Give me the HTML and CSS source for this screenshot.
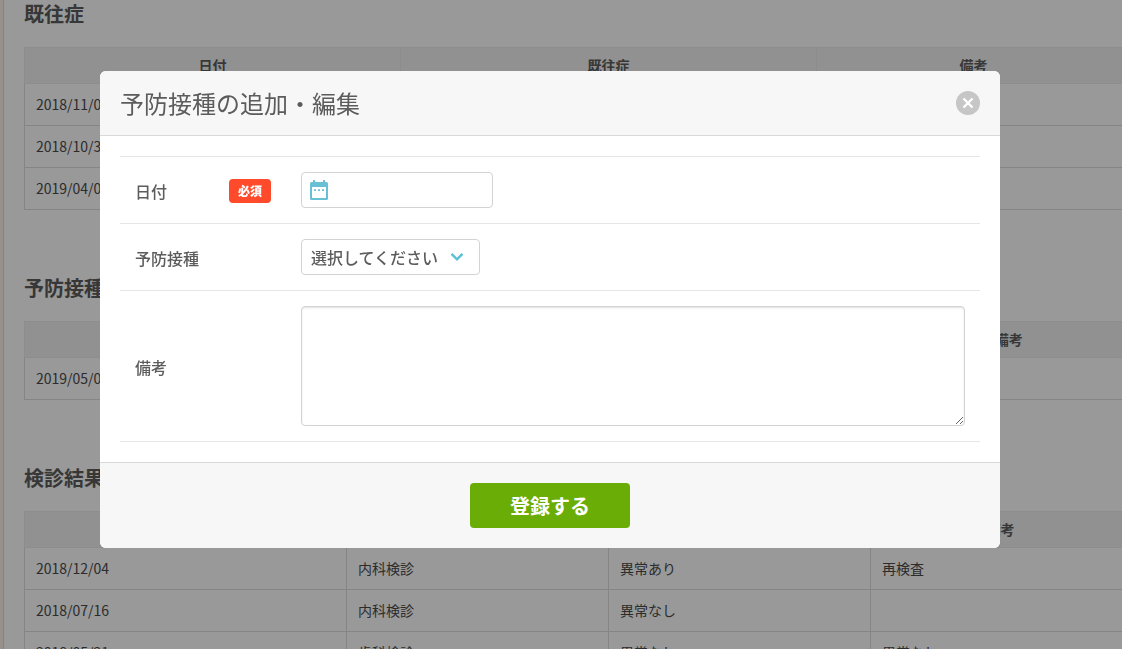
FILE: index.html
```html
<!DOCTYPE html>
<html lang="ja">
<head>
<meta charset="utf-8">
<meta name="viewport" content="width=device-width, initial-scale=1">
<title>予防接種の追加・編集</title>
<link rel="stylesheet" href="styles.css">
</head>
<body>
<main class="page">
  <section class="record">
    <h2 class="record-title">既往症</h2>
    <table class="record-table">
      <colgroup><col class="col-history-date"><col class="col-history-name"><col></colgroup>
      <thead><tr><th>日付</th><th>既往症</th><th>備考</th></tr></thead>
      <tbody>
        <tr><td>2018/11/01</td><td></td><td></td></tr>
        <tr><td>2018/10/31</td><td></td><td></td></tr>
        <tr><td>2019/04/01</td><td></td><td></td></tr>
      </tbody>
    </table>
  </section>
  <section class="record">
    <h2 class="record-title">予防接種</h2>
    <table class="record-table">
      <colgroup><col class="col-vaccine-date"><col class="col-vaccine-name"><col></colgroup>
      <thead><tr><th>日付</th><th>予防接種</th><th>備考</th></tr></thead>
      <tbody>
        <tr><td>2019/05/01</td><td></td><td></td></tr>
      </tbody>
    </table>
  </section>
  <section class="record">
    <h2 class="record-title">検診結果</h2>
    <table class="record-table">
      <colgroup><col class="col-checkup-date"><col class="col-checkup"><col class="col-checkup"><col></colgroup>
      <thead><tr><th>日付</th><th>検診</th><th>結果</th><th>備考</th></tr></thead>
      <tbody>
        <tr><td>2018/12/04</td><td>内科検診</td><td>異常あり</td><td>再検査</td></tr>
        <tr><td>2018/07/16</td><td>内科検診</td><td>異常なし</td><td></td></tr>
        <tr><td>2018/05/21</td><td>歯科検診</td><td>異常なし</td><td>異常なし</td></tr>
      </tbody>
    </table>
  </section>
</main>

<div class="overlay">
  <form class="modal" role="dialog" aria-modal="true" aria-labelledby="modal-title">
    <header class="modal-header">
      <h1 class="modal-title" id="modal-title">予防接種の追加・編集</h1>
      <button class="close" type="button" aria-label="閉じる">
        <svg class="close-icon" viewBox="0 0 24 24" aria-hidden="true"><circle cx="12" cy="12" r="12" fill="#c6c6c6"/><path d="M7.500 7.500l9 9M16.500 7.500l-9 9" stroke="#fff" stroke-width="2.400"/></svg>
      </button>
    </header>
    <div class="modal-body">
      <div class="fields">
        <div class="field">
          <div class="field-label"><label for="date">日付</label><span class="required">必須</span></div>
          <div class="field-control">
            <div class="date-box">
              <svg class="date-icon" viewBox="0 0 18 20" aria-hidden="true"><path fill="#67c0d3" fill-rule="evenodd" d="M3 0h2v2h8V0h2v2h1.500a1.500 1.500 0 0 1 1.500 1.500v15a1.500 1.500 0 0 1-1.500 1.500h-15A1.500 1.500 0 0 1 0 18.500v-15A1.500 1.500 0 0 1 1.500 2H3zM2 7v11h14V7zM4 9.200h2v1.800H4zM8 9.200h2v1.800H8zM12 9.200h2v1.800h-2z"/></svg>
              <input class="date-input" id="date" type="text" required>
            </div>
          </div>
        </div>
        <div class="field">
          <div class="field-label"><label for="vaccine">予防接種</label></div>
          <div class="field-control">
            <div class="select-box">
              <select class="select" id="vaccine"><option>選択してください</option></select>
              <svg class="select-icon" viewBox="0 0 14 10" aria-hidden="true"><path d="M1.500 1.800L7 7.300l5.500-5.500" fill="none" stroke="#5cbfd8" stroke-width="2.400"/></svg>
            </div>
          </div>
        </div>
        <div class="field">
          <div class="field-label"><label for="note">備考</label></div>
          <div class="field-control"><textarea class="note" id="note"></textarea></div>
        </div>
      </div>
    </div>
    <footer class="modal-footer"><button class="submit" type="submit">登録する</button></footer>
  </form>
</div>
</body>
</html>
```
FILE: styles.css
```css
* { box-sizing: border-box; }

body {
  margin: 0;
  height: 100vh;
  overflow: hidden;
  background: #fbf3e8;
  color: #5c5c5c;
  font-family: "Noto Sans CJK JP", sans-serif;
  font-size: 14px;
  font-weight: 500;
  line-height: 20px;
}

button, input, select, textarea { font: inherit; color: inherit; }

.page {
  min-width: 1128px;
  min-height: 100%;
  margin-left: 3px;
  padding-left: 20px;
  border-left: 1px solid #e2dac8;
  background: #fff;
}

.record { margin-bottom: 64px; }

.record-title {
  margin: 0 0 19px;
  font-size: 20px;
  font-weight: 700;
  line-height: 28px;
}

.record-table {
  width: 100%;
  border-collapse: collapse;
  table-layout: fixed;
}

.record-table th,
.record-table td {
  height: 42px;
  padding: 0 11px 2px;
  border: 1px solid #dedede;
  font-weight: 400;
  text-align: left;
}

.record-table td { color: #4a4a4a; }

.record-table th {
  height: 36px;
  border-color: #ebebeb;
  background: #f2f2f2;
  font-weight: 700;
  text-align: center;
}

.col-history-date { width: 376px; }
.col-history-name { width: 416px; }
.col-vaccine-date { width: 38%; }
.col-vaccine-name { width: 40%; }
.col-checkup-date { width: 322px; }
.col-checkup { width: 262px; }

.overlay {
  position: fixed;
  inset: 0;
  display: flex;
  align-items: flex-start;
  justify-content: center;
  padding: 71px 22px 0 0;
  background: rgba(0, 0, 0, 0.4);
}

.modal {
  width: 100%;
  max-width: 900px;
  border-radius: 6px;
  overflow: hidden;
  background: #fff;
}

.modal-header {
  display: flex;
  align-items: center;
  justify-content: space-between;
  padding: 14px 20px;
  border-bottom: 1px solid #d9d9d9;
  background: #f7f7f7;
}

.modal-title {
  margin: 0;
  font-size: 24px;
  font-weight: 400;
  line-height: 36px;
}

.close {
  display: flex;
  padding: 0;
  border: 0;
  background: none;
}

.close-icon { width: 24px; height: 24px; }

.modal-body { padding: 20px; font-size: 16px; line-height: 24px; }

.fields { border-top: 1px solid #e6e6e6; }

.field { display: flex; border-bottom: 1px solid #e6e6e6; }

.field-label {
  display: flex;
  flex: 0 0 166px;
  align-items: center;
  justify-content: space-between;
  padding: 16px 15px 15px;
}

.field-control { flex: 1; padding: 15px; }

.required {
  padding: 0 9px;
  border-radius: 4px;
  background: #ff4a2b;
  color: #fff;
  font-size: 12px;
  font-weight: 900;
}

.date-box,
.select-box,
.note {
  border: 1px solid #d3d3d3;
  border-radius: 4px;
  background: #fff;
}

.date-box {
  display: flex;
  align-items: center;
  gap: 8px;
  width: 192px;
  height: 36px;
  padding: 0 8px;
}

.date-icon { flex: none; width: 18px; height: 20px; }

.date-input {
  flex: 1;
  min-width: 0;
  border: 0;
  outline: 0;
  background: none;
}

.select-box {
  display: grid;
  align-items: center;
  width: 179px;
  height: 36px;
}

.select {
  grid-area: 1 / 1;
  width: 100%;
  height: 34px;
  padding: 0 9px;
  border: 0;
  outline: 0;
  appearance: none;
  background: none;
}

.select-icon {
  grid-area: 1 / 1;
  justify-self: end;
  width: 14px;
  height: 10px;
  margin-right: 15px;
  pointer-events: none;
}

.note {
  display: block;
  width: 100%;
  height: 120px;
  box-shadow: inset 0 1px 2px rgba(0, 0, 0, 0.12);
  resize: both;
}

.modal-footer {
  display: flex;
  justify-content: center;
  padding: 20px;
  border-top: 1px solid #d9d9d9;
  background: #f7f7f7;
}

.submit {
  width: 160px;
  height: 45px;
  border: 0;
  border-radius: 4px;
  background: #6bad07;
  color: #fff;
  font-size: 20px;
  font-weight: 700;
}
```
